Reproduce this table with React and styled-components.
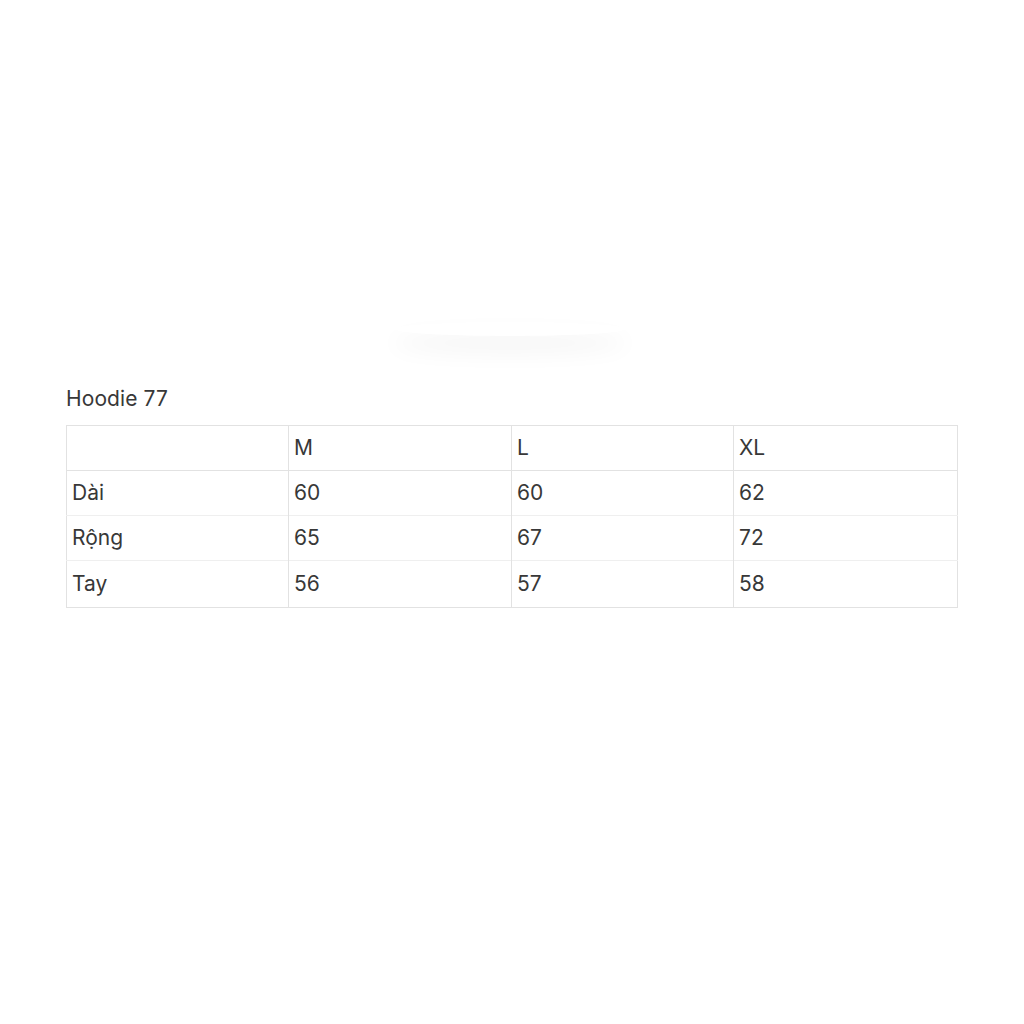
import React from 'react';
import styled, { createGlobalStyle } from 'styled-components';

const GlobalStyle = createGlobalStyle`
  html, body {
    margin: 0;
    padding: 0;
    background: #fff;
  }
  body {
    font-family: Inter, "Noto Sans", "DejaVu Sans", sans-serif;
    color: #333;
  }
`;

const Page = styled.div`
  width: 1024px;
  height: 1024px;
  box-sizing: border-box;
  padding: 0 66px;
  display: flex;
  flex-direction: column;
`;

const ImageBox = styled.div`
  align-self: center;
  width: 230px;
  height: 14px;
  margin-top: 322px;
  margin-left: -4px;
  background: #fff;
  box-shadow: 0 14px 22px 4px rgba(0, 0, 0, 0.04);
  border-radius: 50%;
`;

const Title = styled.h3`
  margin: 50px 0 13px;
  font-size: 21px;
  font-weight: 400;
  line-height: 26px;
  letter-spacing: 0.1px;
  color: #383838;
`;

const Table = styled.table`
  width: 892px;
  border-collapse: collapse;
  table-layout: fixed;
  border: 1px solid #e2e2e2;
`;

const Row = styled.tr`
  border-top: 1px solid ${p => (p.$head ? '#e2e2e2' : '#efefef')};
  &:first-child {
    border-top: none;
  }
`;

const Cell = styled.td`
  height: ${p => (p.$tall ? '46px' : '44px')};
  padding: 0 5px;
  font-size: 21px;
  line-height: 26px;
  color: #383838;
  vertical-align: middle;
  border-left: 1px solid #e2e2e2;
  &:first-child {
    border-left: none;
  }
`;

const rows = [
  ['Dài', '60', '60', '62'],
  ['Rộng', '65', '67', '72'],
  ['Tay', '56', '57', '58'],
];

export default function App() {
  return (
    <>
      <GlobalStyle />
      <Page>
        <ImageBox />
        <Title>Hoodie 77</Title>
        <Table>
          <colgroup>
            <col style={{ width: 222 }} />
            <col style={{ width: 223 }} />
            <col style={{ width: 222 }} />
            <col />
          </colgroup>
          <tbody>
            <Row>
              <Cell></Cell>
              <Cell>M</Cell>
              <Cell>L</Cell>
              <Cell>XL</Cell>
            </Row>
            {rows.map((r, i) => (
              <Row key={r[0]} $head={i === 0}>
                {r.map((c, j) => (
                  <Cell key={j} $tall={i === rows.length - 1}>{c}</Cell>
                ))}
              </Row>
            ))}
          </tbody>
        </Table>
      </Page>
    </>
  );
}
